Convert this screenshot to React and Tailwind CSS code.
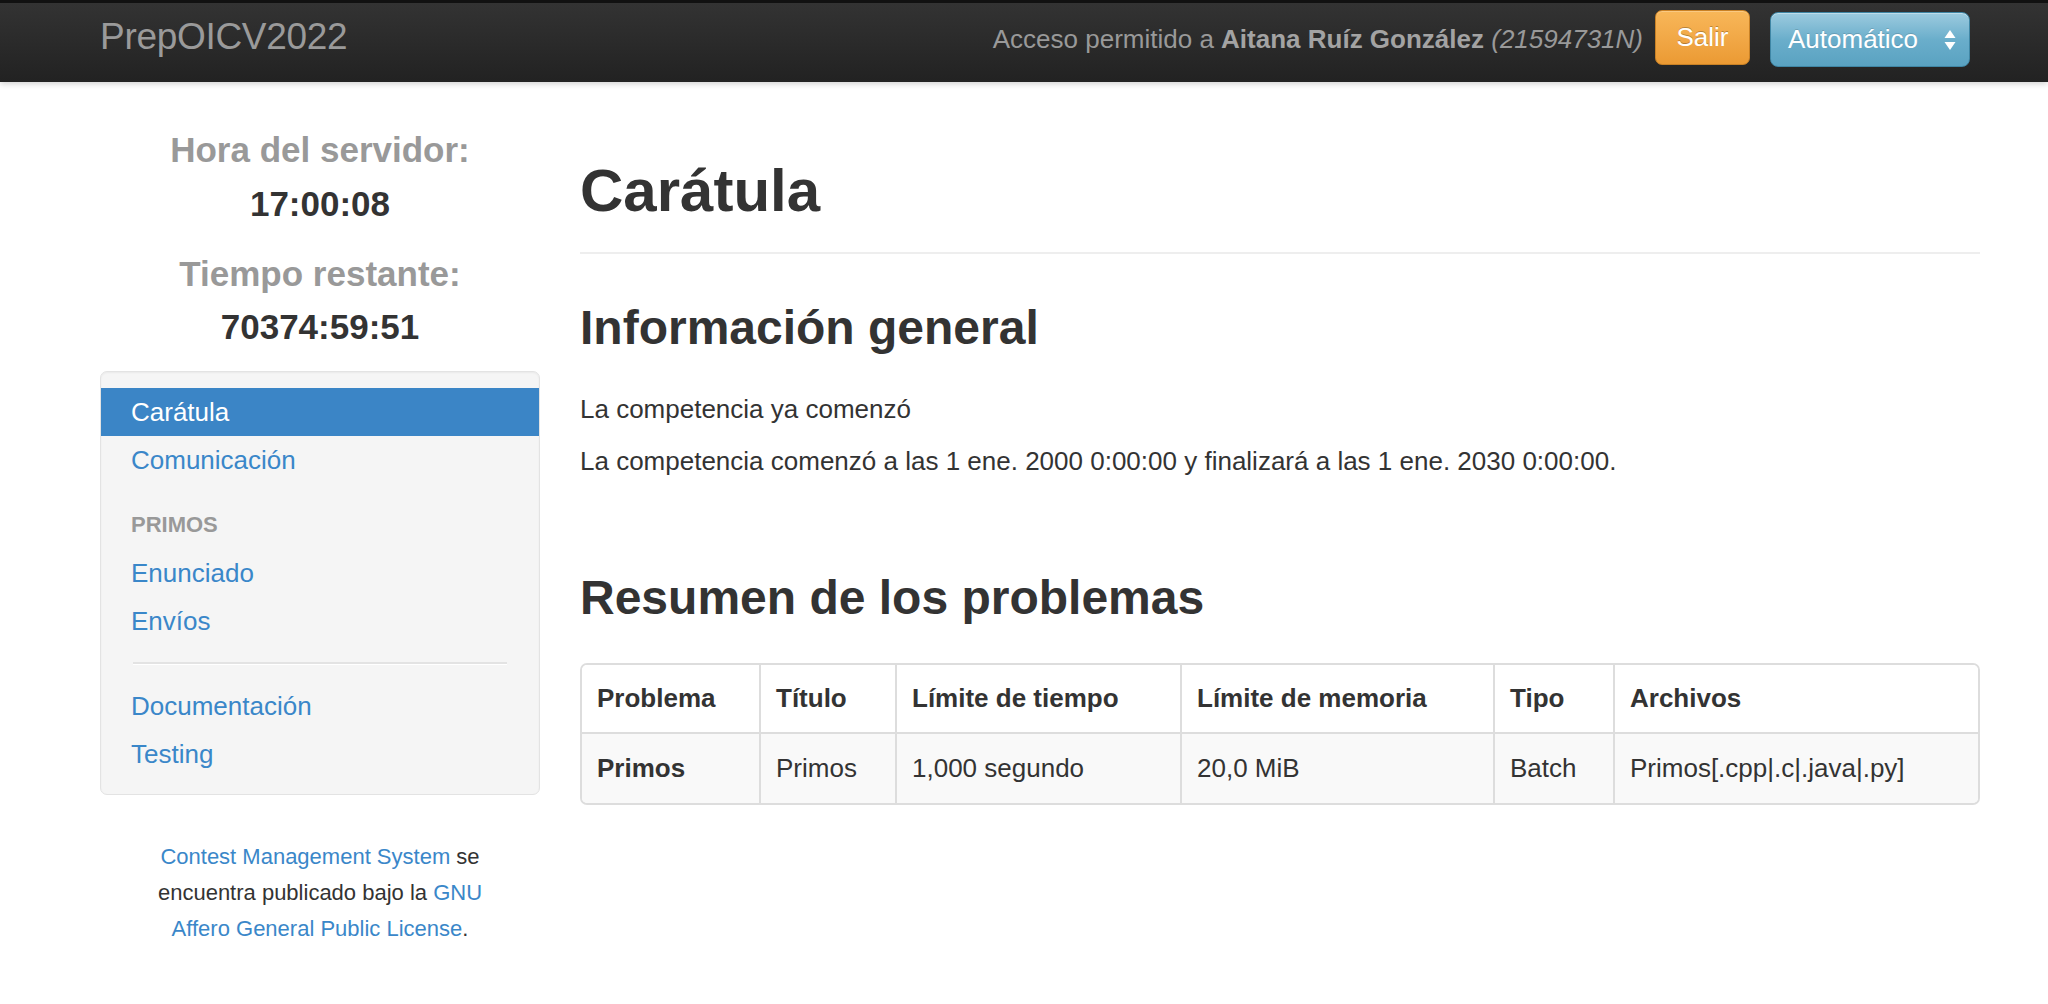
import React from "react";

const cols = [
  { h: "Problema", w: "w-[178px]" },
  { h: "Título", w: "w-[136px]" },
  { h: "Límite de tiempo", w: "w-[285px]" },
  { h: "Límite de memoria", w: "w-[313px]" },
  { h: "Tipo", w: "w-[120px]" },
  { h: "Archivos", w: "" },
];

const row = ["Primos", "Primos", "1,000 segundo", "20,0 MiB", "Batch", "Primos[.cpp|.c|.java|.py]"];

function Navbar() {
  return (
    <div className="h-[82px] border-t-[3px] border-[#111111] bg-linear-to-b from-[#333333] to-[#222222] shadow-[0_2px_6px_rgba(0,0,0,0.18)] flex items-start pl-[100px] pr-[78px]">
      <div className="mt-[12px] text-[37px] leading-[44px] text-[#9a9a9a] tracking-[-0.3px]">PrepOICV2022</div>
      <div className="ml-auto flex items-start">
        <div className="mt-[18px] text-[26px] leading-[37px] text-[#999999] whitespace-nowrap">
          Acceso permitido a <span className="font-bold text-[#a3a3a3]">Aitana Ruíz González</span>{" "}
          <span className="italic">(21594731N)</span>
        </div>
        <div className="ml-[12px] mt-[7px] w-[95px] h-[55px] rounded-[7px] border border-[#c98125] bg-linear-to-b from-[#f8b759] to-[#eb9a33] shadow-[inset_0_1px_0_rgba(255,255,255,0.25)] flex items-center justify-center text-white text-[26px] [text-shadow:0_-1px_0_rgba(0,0,0,0.25)]">
          Salir
        </div>
        <div className="ml-[20px] mt-[9px] w-[200px] h-[55px] rounded-[8px] border border-[#3f86a5] bg-linear-to-b from-[#9ccbdf] via-[#6aaecb] to-[#5aa2c1] shadow-[inset_0_1px_0_rgba(255,255,255,0.35)] flex items-center pl-[17px] pr-[12px] text-white text-[26px]">
          <span className="[text-shadow:0_-1px_0_rgba(0,0,0,0.15)]">Automático</span>
          <svg className="ml-auto" width="14" height="26" viewBox="0 0 14 26">
            <polygon points="7,3 1.5,11 12.5,11" fill="white" />
            <polygon points="1.5,15 12.5,15 7,23" fill="white" />
          </svg>
        </div>
      </div>
    </div>
  );
}

function NavItem({ children, active }) {
  return (
    <div
      className={
        "h-[48px] leading-[48px] pl-[30px] text-[26px] " +
        (active ? "bg-[#3b85c6] text-white" : "text-[#3a87c9]")
      }
    >
      {children}
    </div>
  );
}

function Sidebar() {
  return (
    <div className="w-[440px] shrink-0">
      <div className="pt-[46px] text-center font-bold text-[35px] leading-[44px]">
        <div className="text-[#999999]">Hora del servidor:</div>
        <div className="mt-[10px] text-[#333333]">17:00:08</div>
        <div className="mt-[26px] text-[#999999]">Tiempo restante:</div>
        <div className="mt-[9px] text-[#333333]">70374:59:51</div>
      </div>
      <div className="mt-[22px] rounded-[7px] border border-[#e3e3e3] bg-[#f5f5f5] shadow-[inset_0_1px_2px_rgba(0,0,0,0.05)] py-[16px]">
        <NavItem active>Carátula</NavItem>
        <NavItem>Comunicación</NavItem>
        <div className="mt-[17px] h-[48px] leading-[48px] pl-[30px] text-[22px] font-bold text-[#999999] uppercase">
          Primos
        </div>
        <NavItem>Enunciado</NavItem>
        <NavItem>Envíos</NavItem>
        <div className="mx-[32px] my-[17px] h-[2px] bg-[#e3e3e3] border-b border-white box-content"></div>
        <NavItem>Documentación</NavItem>
        <NavItem>Testing</NavItem>
      </div>
      <div className="mt-[44px] w-[370px] mx-auto text-center text-[22px] leading-[36px] text-[#333333]">
        <span className="text-[#3a87c9]">Contest Management System</span> se encuentra publicado bajo la{" "}
        <span className="text-[#3a87c9]">GNU Affero General Public License</span>.
      </div>
    </div>
  );
}

function Main() {
  return (
    <div className="ml-[40px] w-[1400px]">
      <h1 className="mt-[76px] text-[60px] leading-[66px] font-bold text-[#333333]">Carátula</h1>
      <div className="mt-[28px] h-[2px] bg-[#eeeeee]"></div>
      <h2 className="mt-[47px] text-[48px] leading-[53px] font-bold text-[#333333]">Información general</h2>
      <p className="mt-[37px] text-[26px] leading-[37px]">La competencia ya comenzó</p>
      <p className="mt-[15px] text-[26px] leading-[37px]">
        La competencia comenzó a las 1 ene. 2000 0:00:00 y finalizará a las 1 ene. 2030 0:00:00.
      </p>
      <h2 className="mt-[91px] text-[48px] leading-[53px] font-bold text-[#333333]">Resumen de los problemas</h2>
      <div className="mt-[39px] rounded-[7px] border-2 border-[#dddddd] overflow-hidden">
        <table className="w-full table-fixed border-collapse text-[26px] leading-[37px]">
          <thead>
            <tr className="bg-white">
              {cols.map((c, i) => (
                <th
                  key={i}
                  className={
                    c.w +
                    " h-[68px] text-left font-bold pl-[15px] " +
                    (i > 0 ? "border-l-2 border-[#dddddd]" : "")
                  }
                >
                  {c.h}
                </th>
              ))}
            </tr>
          </thead>
          <tbody>
            <tr className="bg-[#f9f9f9]">
              {row.map((v, i) => (
                <td
                  key={i}
                  className={
                    "h-[70px] pl-[15px] border-t-2 border-[#dddddd] " +
                    (i > 0 ? "border-l-2 " : "font-bold ")
                  }
                >
                  {v}
                </td>
              ))}
            </tr>
          </tbody>
        </table>
      </div>
    </div>
  );
}

export default function App() {
  return (
    <div className="min-h-screen bg-white text-[#333333] font-['Liberation_Sans',Arial,sans-serif]">
      <Navbar />
      <div className="flex pl-[100px]">
        <Sidebar />
        <Main />
      </div>
    </div>
  );
}
